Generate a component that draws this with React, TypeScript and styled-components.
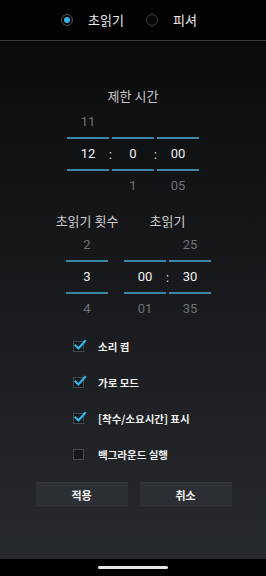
import React from "react";
import styled, { createGlobalStyle } from "styled-components";

const GlobalStyle = createGlobalStyle`
  html, body {
    margin: 0;
    padding: 0;
    background: #000;
  }
  body {
    font-family: "Noto Sans CJK KR", "Noto Sans", sans-serif;
  }
`;

const KR = `"Noto Sans CJK KR", "Noto Sans", sans-serif`;
const NUM = `Roboto, "Noto Sans CJK KR", sans-serif`;

type Col = { above?: string; value: string; below?: string };

const Picker = ({ cols, seps }: { cols: Col[]; seps: (string | null)[] }) => {
  return (
    <PickerRow>
      {cols.map((c, i) => (
        <React.Fragment key={i}>
          {i > 0 && <Sep $wide={seps[i - 1] === null}>{seps[i - 1] ?? ""}</Sep>}
          <Column>
            <Side>{c.above ?? ""}</Side>
            <Line />
            <Value>{c.value}</Value>
            <Line />
            <Side>{c.below ?? ""}</Side>
          </Column>
        </React.Fragment>
      ))}
    </PickerRow>
  );
};

const CheckRow = ({ label, checked }: { label: string; checked: boolean }) => (
  <CheckItem>
    <Box>
      {checked && (
        <svg width="14" height="14" viewBox="0 0 14 14">
          <path
            d="M2.5 7.5 L5.5 10.5 L12 3"
            fill="none"
            stroke="#33b5e5"
            strokeWidth="2.2"
            strokeLinecap="square"
          />
        </svg>
      )}
    </Box>
    <CheckLabel>{label}</CheckLabel>
  </CheckItem>
);

export default function App() {
  return (
    <Screen>
      <GlobalStyle />
      <TopBar>
        <RadioItem>
          <Radio $on />
          <RadioLabel>초읽기</RadioLabel>
        </RadioItem>
        <RadioItem>
          <Radio />
          <RadioLabel>피셔</RadioLabel>
        </RadioItem>
      </TopBar>
      <Content>
        <Title>제한 시간</Title>
        <Picker
          cols={[
            { above: "11", value: "12" },
            { value: "0", below: "1" },
            { value: "00", below: "05" },
          ]}
          seps={[":", ":"]}
        />
        <Section2>
          <LabelRow>
            <Label $w={42}>초읽기 횟수</Label>
            <Label $w={87}>초읽기</Label>
          </LabelRow>
          <Picker
            cols={[
              { above: "2", value: "3", below: "4" },
              { value: "00", below: "01" },
              { above: "25", value: "30", below: "35" },
            ]}
            seps={[null, ":"]}
          />
        </Section2>
        <Checks>
          <CheckRow label="소리 켬" checked />
          <CheckRow label="가로 모드" checked />
          <CheckRow label="[착수/소요시간] 표시" checked />
          <CheckRow label="백그라운드 실행" checked={false} />
        </Checks>
        <Buttons>
          <Button>적용</Button>
          <Button>취소</Button>
        </Buttons>
      </Content>
      <NavBar>
        <Handle />
      </NavBar>
    </Screen>
  );
}

const Screen = styled.div`
  width: 266px;
  height: 576px;
  display: flex;
  flex-direction: column;
  overflow: hidden;
  background: #000;
`;

const TopBar = styled.div`
  height: 40px;
  flex-shrink: 0;
  background: #020202;
  border-bottom: 1px solid #3a3a3a;
  display: flex;
  align-items: center;
  justify-content: center;
  gap: 22px;
  padding-right: 8px;
`;

const RadioItem = styled.div`
  display: flex;
  align-items: center;
  gap: 15px;
`;

const Radio = styled.div<{ $on?: boolean }>`
  width: 10px;
  height: 10px;
  border-radius: 50%;
  border: 1px solid ${(p) => (p.$on ? "#4a4f55" : "#3d3d3d")};
  background: #070707;
  position: relative;
  &::after {
    content: "";
    display: ${(p) => (p.$on ? "block" : "none")};
    position: absolute;
    inset: 2px;
    border-radius: 50%;
    background: #33b1e3;
  }
`;

const RadioLabel = styled.span`
  font-family: ${KR};
  font-size: 13px;
  color: #eeeeee;
  line-height: 20px;
`;

const Content = styled.div`
  flex: 1;
  display: flex;
  flex-direction: column;
  align-items: center;
  padding-top: 45px;
  background: linear-gradient(180deg, #0a0b0d 0%, #1a1c1f 55%, #272a2e 100%);
`;

const Title = styled.div`
  font-family: ${KR};
  font-size: 13px;
  line-height: 20px;
  height: 21px;
  color: #c8c8c8;
`;

const PickerRow = styled.div`
  display: flex;
`;

const Column = styled.div`
  width: 42px;
  display: flex;
  flex-direction: column;
  align-items: stretch;
`;

const Side = styled.div`
  height: 30px;
  line-height: 30px;
  text-align: center;
  font-family: ${NUM};
  font-size: 13px;
  color: #6f7275;
`;

const Value = styled.div`
  height: 30px;
  line-height: 30px;
  text-align: center;
  font-family: ${NUM};
  font-size: 13px;
  color: #f2f2f2;
`;

const Line = styled.div`
  height: 2px;
  background: #3c88a4;
`;

const Sep = styled.div<{ $wide?: boolean }>`
  width: ${(p) => (p.$wide ? "16px" : "3px")};
  display: flex;
  align-items: center;
  justify-content: center;
  padding-top: 1px;
  font-family: ${NUM};
  font-size: 12px;
  color: #e8e8e8;
  overflow: visible;
  white-space: nowrap;
`;

const Section2 = styled.div`
  display: flex;
  flex-direction: column;
  padding-left: 11px;
  margin-top: 9px;
`;

const LabelRow = styled.div`
  display: flex;
  gap: 16px;
  height: 20px;
  align-items: center;
`;

const Label = styled.div<{ $w: number }>`
  width: ${(p) => p.$w}px;
  display: flex;
  justify-content: center;
  white-space: nowrap;
  font-family: ${KR};
  font-size: 13px;
  color: #cfcfcf;
`;

const Checks = styled.div`
  align-self: stretch;
  display: flex;
  flex-direction: column;
  gap: 16px;
  padding-left: 73px;
  margin-top: 12px;
`;

const CheckItem = styled.div`
  display: flex;
  align-items: center;
  height: 20px;
  gap: 14px;
`;

const Box = styled.div`
  width: 9px;
  height: 9px;
  border: 1px solid #45484c;
  background: #16181b;
  position: relative;
  flex-shrink: 0;
  svg {
    position: absolute;
    left: -1px;
    top: -4px;
  }
`;

const CheckLabel = styled.span`
  font-family: ${KR};
  font-size: 10.5px;
  font-weight: 700;
  color: #f0f0f0;
  white-space: nowrap;
`;

const Buttons = styled.div`
  display: flex;
  gap: 12px;
  margin-top: 18px;
  padding-left: 1px;
`;

const Button = styled.div`
  width: 92px;
  height: 26px;
  display: flex;
  align-items: center;
  justify-content: center;
  background: #2c2f33;
  border-top: 1px solid #33363a;
  border-bottom: 1px solid #202225;
  box-sizing: border-box;
  font-family: ${KR};
  font-size: 11px;
  font-weight: 700;
  color: #f0f0f0;
`;

const NavBar = styled.div`
  height: 17px;
  flex-shrink: 0;
  background: #000;
  display: flex;
  align-items: center;
  justify-content: center;
`;

const Handle = styled.div`
  width: 70px;
  height: 3px;
  border-radius: 2px;
  background: #e6e6e6;
`;
